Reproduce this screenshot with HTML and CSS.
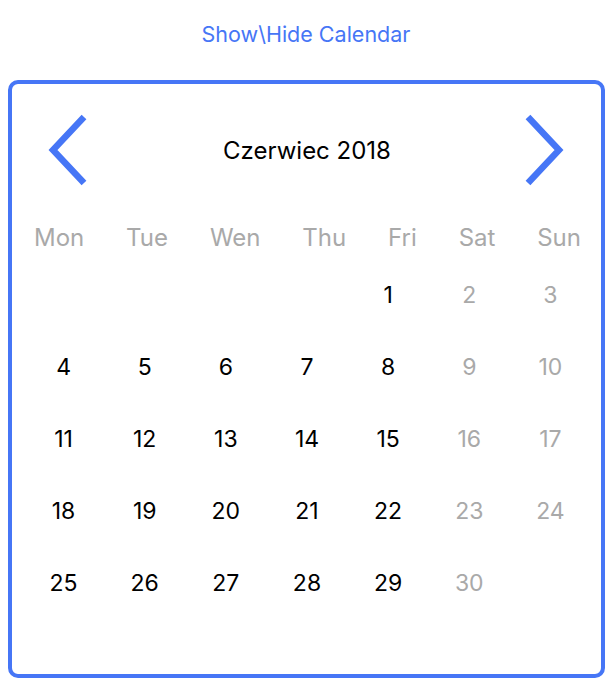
FILE: index.html
```html
<!DOCTYPE html>
<html>
<head>
<meta charset="utf-8">
<link rel="stylesheet" href="styles.css">
</head>
<body>
<div class="page">
  <div class="toggle">Show\Hide Calendar</div>
  <div class="calendar">
    <div class="header">
      <svg class="arrow" width="44" height="72" viewBox="0 0 44 72"><polyline points="37,3 6,36 37,69" fill="none" stroke="#4676f6" stroke-width="6.5"/></svg>
      <div class="title">Czerwiec 2018</div>
      <svg class="arrow" width="44" height="72" viewBox="0 0 44 72"><polyline points="7,3 38,36 7,69" fill="none" stroke="#4676f6" stroke-width="6.5"/></svg>
    </div>
    <div class="weekdays">
      <span>Mon</span><span>Tue</span><span>Wen</span><span>Thu</span><span>Fri</span><span>Sat</span><span>Sun</span>
    </div>
    <div class="days">
      <span></span><span></span><span></span><span></span><span>1</span><span class="we">2</span><span class="we">3</span>
      <span>4</span><span>5</span><span>6</span><span>7</span><span>8</span><span class="we">9</span><span class="we">10</span>
      <span>11</span><span>12</span><span>13</span><span>14</span><span>15</span><span class="we">16</span><span class="we">17</span>
      <span>18</span><span>19</span><span>20</span><span>21</span><span>22</span><span class="we">23</span><span class="we">24</span>
      <span>25</span><span>26</span><span>27</span><span>28</span><span>29</span><span class="we">30</span><span></span>
    </div>
  </div>
</div>
</body>
</html>
```
FILE: styles.css
```css
html, body {
  margin: 0;
  padding: 0;
  background: #fff;
}
body {
  font-family: Inter, "Liberation Sans", sans-serif;
  width: 616px;
  height: 691px;
  overflow: hidden;
}
.page {
  padding: 0 11px 0 8px;
}
.toggle {
  color: #4676f6;
  font-size: 21.5px;
  text-align: center;
  height: 80px;
  line-height: 69px;
  padding-right: 1px;
}
.calendar {
  box-sizing: border-box;
  width: 597px;
  height: 598px;
  border: 4px solid #4676f6;
  border-radius: 10px;
}
.header {
  display: flex;
  align-items: center;
  justify-content: space-between;
  padding: 30px 36px 0 35px;
  height: 72px;
}
.title {
  font-size: 24px;
  color: #000;
  padding-left: 2px;
}
.weekdays {
  display: flex;
  justify-content: space-between;
  padding: 0 20px 0 22px;
  margin-top: 31px;
  height: 42px;
  line-height: 42px;
  font-size: 24px;
  color: #a9a9a9;
}
.days {
  display: grid;
  grid-template-columns: repeat(7, 1fr);
  grid-auto-rows: 72px;
  padding: 0 10px 0 11px;
}
.days span {
  text-align: center;
  font-size: 23px;
  line-height: 72px;
  color: #000;
}
.days span.we {
  color: #a9a9a9;
}
```
